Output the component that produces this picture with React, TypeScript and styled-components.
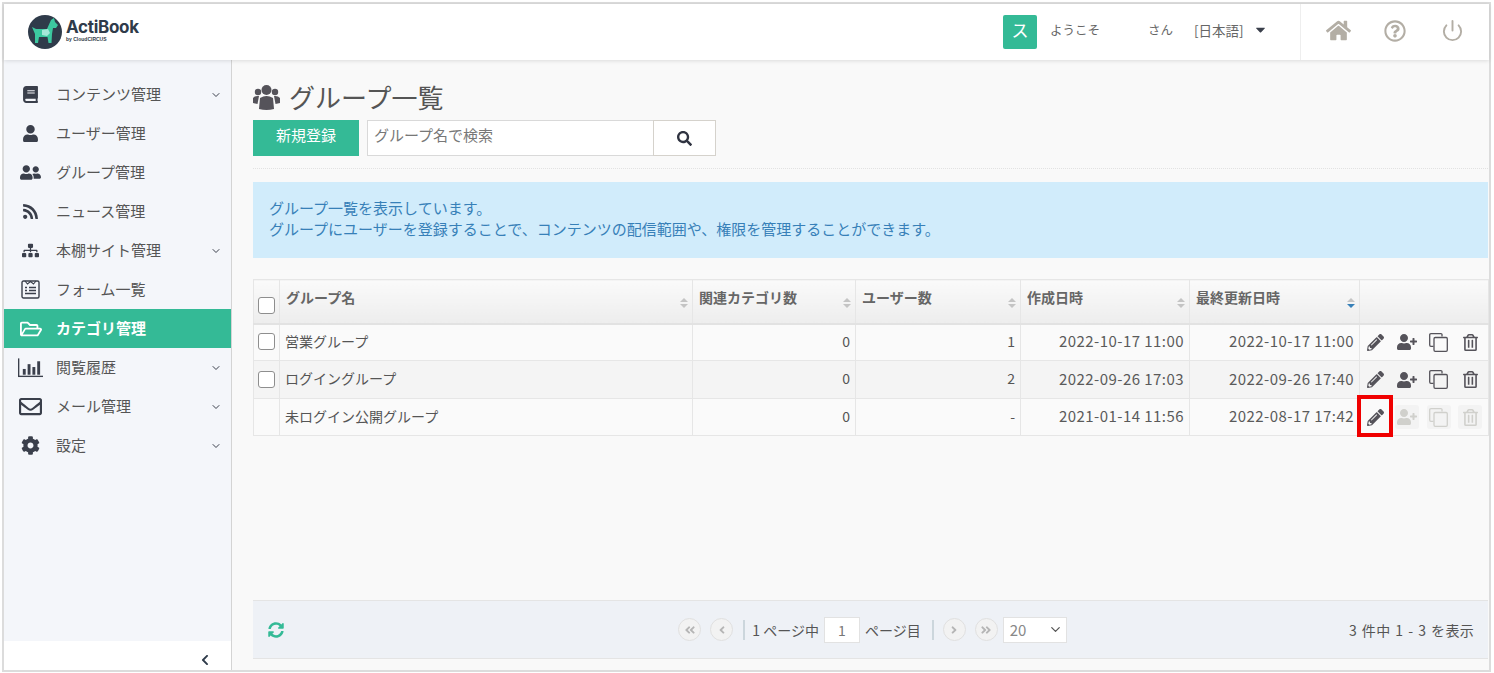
import React from 'react';
import styled, { createGlobalStyle } from 'styled-components';
import {
  FaBook, FaUser, FaUserFriends, FaRss, FaSitemap, FaRegFolderOpen, FaRegEnvelope, FaCog,
  FaHome, FaSearch, FaPencilAlt, FaUserPlus, FaRegTrashAlt, FaSyncAlt,
  FaCaretDown, FaChevronLeft, FaAngleDoubleLeft, FaAngleDoubleRight, FaAngleLeft, FaAngleRight,
  FaRegQuestionCircle,
} from 'react-icons/fa';
import { FiChevronDown, FiPower } from 'react-icons/fi';

const GlobalStyle = createGlobalStyle`
  html, body { margin: 0; padding: 0; height: 100%; overflow: hidden; background: #fff; }
  * { box-sizing: border-box; }
  body { font-family: "Noto Sans CJK JP", "Noto Sans", sans-serif; font-size: 14px; color: #555; }
`;

const Frame = styled.div`
  position: relative;
  margin: 2px 3px 0 2px;
  height: 670px;
  border: 2px solid #dcdcdc;
  display: flex;
  flex-direction: column;
  background: #f9f9f9;
`;

const Header = styled.header`
  height: 56px;
  flex: none;
  background: #fff;
  display: flex;
  align-items: center;
  box-shadow: 0 1px 4px rgba(0, 0, 0, 0.12);
  z-index: 2;
`;

const Logo = styled.div`
  display: flex;
  align-items: center;
  margin-left: 23px;
  gap: 3px;
`;

const LogoText = styled.div`
  display: flex;
  flex-direction: column;
  color: #2f3b4a;
  margin-top: -5px;
`;

const LogoName = styled.span`
  font-family: "Inter", "Liberation Sans", sans-serif;
  font-weight: 700;
  font-size: 17px;
  line-height: 20px;
  letter-spacing: -0.3px;
`;

const LogoSub = styled.span`
  font-family: "Liberation Sans", sans-serif;
  font-size: 5px;
  line-height: 5px;
  font-weight: 700;
`;

const UserArea = styled.div`
  margin-left: auto;
  display: flex;
  align-items: center;
  height: 100%;
  font-size: 12.5px;
  color: #666;
`;

const Avatar = styled.div`
  width: 34px;
  height: 34px;
  border-radius: 2px;
  background: #34ba96;
  color: #fff;
  font-size: 17px;
  padding-bottom: 5px;
  display: flex;
  align-items: center;
  justify-content: center;
  margin-right: 13px;
`;

const Greeting = styled.span`
  width: 98px;
  padding-bottom: 6px;
`;

const Honorific = styled.span`
  width: 46px;
  padding-bottom: 6px;
`;

const Language = styled.span`
  display: flex;
  align-items: center;
  gap: 9px;
  width: 106px;
  color: #666;
  font-size: 13.5px;
  padding-bottom: 5px;
  svg { color: #3a3f4b; font-size: 15px; }
`;

const HeaderIcons = styled.div`
  height: 100%;
  width: 189px;
  border-left: 1px solid #eee;
  display: flex;
  align-items: center;
  color: #b3aea5;
  padding: 0 0 3px 25px;
  gap: 33px;
`;

const PowerIcon = styled(FiPower)`
  margin-left: 2px;
`;

const Body = styled.div`
  flex: 1;
  display: flex;
  min-height: 0;
`;

const Sidebar = styled.aside`
  width: 228px;
  flex: none;
  background: #f4f6fa;
  border-right: 1px solid #d4d4d4;
  display: flex;
  flex-direction: column;
  padding-top: 15px;
`;

const Menu = styled.nav`
  flex: 1;
`;

const MenuItem = styled.div<{ $active?: boolean }>`
  height: 39px;
  display: flex;
  align-items: center;
  padding: 0 10px 0 14px;
  font-size: 15px;
  font-weight: ${(p) => (p.$active ? 700 : 400)};
  background: ${(p) => (p.$active ? '#34ba96' : 'transparent')};
  color: ${(p) => (p.$active ? '#fff' : '#555')};
`;

const MenuIcon = styled.span<{ $active?: boolean }>`
  width: 25px;
  margin-right: 13px;
  display: flex;
  justify-content: center;
  font-size: 17px;
  color: ${(p) => (p.$active ? '#fff' : '#3a3f4b')};
`;

const MenuLabel = styled.span`
  flex: 1;
  padding-bottom: 3px;
`;

const MenuCaret = styled(FiChevronDown)`
  font-size: 12px;
  color: #3a3f4b;
  margin-right: -1px;
`;

const SidebarFoot = styled.div`
  height: 29px;
  flex: none;
  background: #fff;
  display: flex;
  align-items: center;
  justify-content: flex-end;
  padding: 8px 20px 0 0;
  color: #2f3b4a;
  font-size: 12px;
`;

const Main = styled.main`
  flex: 1;
  min-width: 0;
  padding: 19px 0 0 21px;
  margin-right: 1px;
  display: flex;
  flex-direction: column;
`;

const Title = styled.h1`
  margin: 0 0 6px;
  height: 35px;
  font-size: 26px;
  line-height: 34px;
  font-weight: 400;
  color: #555;
  display: flex;
  align-items: center;
  gap: 9px;
`;

const Toolbar = styled.div`
  display: flex;
  height: 36px;
`;

const PrimaryButton = styled.button`
  width: 106px;
  height: 36px;
  border: 0;
  background: #34ba96;
  color: #fff;
  font: inherit;
  font-size: 15px;
  padding: 0 0 8px;
  margin-right: 8px;
`;

const SearchBox = styled.input`
  width: 286px;
  height: 36px;
  border: 1px solid #d9d9d9;
  border-right: 0;
  background: #fff;
  padding: 0 6px 7px;
  font: inherit;
  font-size: 15px;
  &::placeholder { color: #777; opacity: 1; }
`;

const SearchButton = styled.button`
  width: 63px;
  height: 36px;
  background: #fff;
  border: 1px solid #d5d2cc;
  color: #2f3340;
  font-size: 15px;
  display: flex;
  align-items: center;
  justify-content: center;
  padding: 0;
`;

const Divider = styled.div`
  border-top: 1px dotted #e2e2e2;
  margin-top: 12px;
  margin-bottom: 13px;
`;

const Notice = styled.div`
  height: 76px;
  background-color: #d1ecfb;
  background-image: radial-gradient(#bcdcee 0.6px, transparent 0.7px);
  background-size: 6px 6px;
  color: #3780b8;
  font-size: 15px;
  line-height: 21px;
  padding: 15px 16px 0;
  margin-bottom: 21px;
`;

const Table = styled.table`
  width: 1235px;
  table-layout: fixed;
  border-collapse: collapse;
  font-size: 14px;
  color: #555;
`;

const Th = styled.th<{ $w: number }>`
  width: ${(p) => p.$w}px;
  height: 44px;
  border: 1px solid #e6e6e6;
  border-bottom: 2px solid #e2e2e2;
  background: linear-gradient(#fafafa, #ededed);
  font-weight: 700;
  font-size: 14px;
  color: #666;
  text-align: left;
  padding: 0 6px 8px;
  position: relative;
`;

const SortMark = styled.span<{ $on?: boolean }>`
  position: absolute;
  right: 4px;
  top: 18px;
  width: 8px;
  height: 10px;
  &::before, &::after {
    content: '';
    position: absolute;
    left: 0;
    border-left: 4px solid transparent;
    border-right: 4px solid transparent;
  }
  &::before { top: 0; border-bottom: 4px solid #c4c4c4; }
  &::after { bottom: 0; border-top: 4px solid ${(p) => (p.$on ? '#3780b8' : '#c4c4c4')}; }
`;

const Row = styled.tr<{ $shade?: boolean }>`
  background: ${(p) => (p.$shade ? '#f4f4f4' : '#fafafa')};
  td { height: ${(p) => (p.$shade ? 38 : 37)}px; }
`;

const Td = styled.td<{ $right?: boolean }>`
  border: 1px solid #e6e6e6;
  padding: 0 5px 3px;
  text-align: ${(p) => (p.$right ? 'right' : 'left')};
  position: relative;
`;

const DateCell = styled(Td)`
  font-size: 15px;
  letter-spacing: 0.45px;
  color: #5a5a5a;
`;

const Check = styled.span`
  display: block;
  width: 17px;
  height: 17px;
  border: 1px solid #8e8e8e;
  border-radius: 3px;
  background: #fff;
  margin: 0 auto;
`;

const HeadCheck = styled(Check)`
  margin-top: 8px;
`;

const CheckHeader = styled(Th)`
  padding: 0;
`;

const CheckCell = styled(Td)`
  padding: 0 0 1px;
`;

const ActionCell = styled(Td)`
  padding: 0;
`;

const Actions = styled.div`
  display: grid;
  grid-template-columns: repeat(4, 31.5px);
  justify-items: center;
  align-items: center;
`;

const ActionIcon = styled.span<{ $off?: boolean }>`
  width: 24px;
  height: 24px;
  display: flex;
  align-items: center;
  justify-content: center;
  font-size: 17px;
  border-radius: 3px;
  color: ${(p) => (p.$off ? '#d0d0cc' : '#55535a')};
  background: ${(p) => (p.$off ? '#f3f3f3' : 'transparent')};
`;

const Highlight = styled.div`
  position: absolute;
  left: -3px;
  top: -4px;
  width: 36px;
  height: 42px;
  border: 4px solid #f00000;
  pointer-events: none;
`;

const Spacer = styled.div`
  flex: 1;
`;

const Pager = styled.div`
  height: 59px;
  margin-bottom: 11px;
  background: #eef1f6;
  border-top: 1px solid #e4e4e4;
  border-bottom: 1px solid #e4e4e4;
  display: grid;
  grid-template-columns: 1fr auto 1fr;
  align-items: center;
  padding: 0 14px 0 15px;
  font-size: 14px;
  color: #555;
`;

const Refresh = styled.span`
  color: #34ba96;
  font-size: 16px;
  display: flex;
`;

const PagerCenter = styled.div`
  display: flex;
  align-items: center;
  margin-left: 3px;
`;

const Round = styled.span<{ $last?: boolean }>`
  width: 23px;
  height: 23px;
  border-radius: 50%;
  border: 1px solid #e0e0e0;
  background: #f2f2f2;
  color: #b5b5b5;
  font-size: 12px;
  display: flex;
  align-items: center;
  justify-content: center;
  margin-right: ${(p) => (p.$last ? 5 : 9)}px;
`;

const Bar = styled.span<{ $end?: boolean }>`
  width: 2px;
  height: 20px;
  background: #ccd6dc;
  margin: ${(p) => (p.$end ? '0 9px 0 11px' : '0 7px 0 1px')};
`;

const PageInput = styled.span`
  width: 36px;
  height: 26px;
  background: #fff;
  border: 1px solid #e2e2e2;
  display: flex;
  align-items: center;
  justify-content: center;
  margin: 0 5px;
  color: #777;
`;

const PageSelect = styled.span`
  width: 64px;
  height: 26px;
  background: #fff;
  border: 1px solid #e2e2e2;
  display: flex;
  align-items: center;
  justify-content: space-between;
  padding: 0 3px 0 6px;
  color: #888;
  font-size: 15px;
  svg { color: #555; font-size: 15px; }
`;

const PagerCount = styled.div`
  text-align: right;
  letter-spacing: 0.3px;
  word-spacing: 1.4px;
`;

const LogoMark = () => (
  <svg width="36" height="36" viewBox="0 0 36 36">
    <circle cx="18" cy="18" r="17" fill="#2f3b4a" />
    <path d="M5 13 L9 15 L20 15 L24 6 L27 4 L28 8 L31 11 L29 14 L26 14 L25 20 L24.5 29 L21.5 29 L20.5 23 L12 23 L11 29 L8 29 L8 20 Z" fill="#3cc8a0" />
    <path d="M15 16 L21 15 L23 19 L20 22 L15 21 Z" fill="#a5e8d8" />
  </svg>
);

const UsersIcon = () => (
  <svg width="27" height="26" viewBox="0 0 27 26" fill="#55535a">
    <circle cx="13.5" cy="6" r="5" />
    <circle cx="5" cy="8" r="3.2" />
    <circle cx="22" cy="8" r="3.2" />
    <path d="M7 14 Q13.5 10 20 14 L21 25 Q13.5 27 6 25 Z" />
    <path d="M0 14 Q2 11.5 6 12 L4.5 20 L0 19 Z" />
    <path d="M27 14 Q25 11.5 21 12 L22.5 20 L27 19 Z" />
  </svg>
);

const CopyIcon = () => (
  <svg width="19" height="19" viewBox="0 0 19 19" fill="none" stroke="currentColor" strokeWidth="1.3">
    <path d="M13 3.5 V1.5 Q13 0.7 12 0.7 H2 Q0.7 0.7 0.7 2 V12 Q0.7 13.3 2 13.3 H4.5" />
    <rect x="5" y="4.5" width="13.3" height="13.8" rx="1.2" />
  </svg>
);

const FormIcon = () => (
  <svg width="19" height="19" viewBox="0 0 19 19" fill="none" stroke="#3a3f4b">
    <rect x="1" y="1" width="17" height="17" rx="1.5" strokeWidth="1.4" />
    <path d="M4 1 L6.5 4 L9.5 1.5 L12.5 4 L15 1" strokeWidth="1.1" />
    <path d="M4 7.5 H6 M8 7.5 H15 M4 10.5 H6 M8 10.5 H15 M4 13.5 H15" strokeWidth="1.4" />
  </svg>
);

const ChartIcon = () => (
  <svg width="26" height="20" viewBox="0 0 26 20" fill="#3a3f4b">
    <rect x="0" y="0" width="1.4" height="19" />
    <rect x="0" y="18" width="26" height="1.4" />
    <rect x="5" y="11" width="3" height="6" />
    <rect x="10" y="6" width="3" height="11" />
    <rect x="15" y="9" width="3" height="8" />
    <rect x="20" y="3" width="3" height="14" />
  </svg>
);

const menu: { label: string; icon: React.ReactNode; caret?: boolean; active?: boolean }[] = [
  { label: 'コンテンツ管理', icon: <FaBook />, caret: true },
  { label: 'ユーザー管理', icon: <FaUser /> },
  { label: 'グループ管理', icon: <FaUserFriends style={{ fontSize: 21 }} /> },
  { label: 'ニュース管理', icon: <FaRss /> },
  { label: '本棚サイト管理', icon: <FaSitemap />, caret: true },
  { label: 'フォーム一覧', icon: <FormIcon /> },
  { label: 'カテゴリ管理', icon: <FaRegFolderOpen style={{ fontSize: 22 }} />, active: true },
  { label: '閲覧履歴', icon: <ChartIcon />, caret: true },
  { label: 'メール管理', icon: <FaRegEnvelope style={{ fontSize: 23 }} />, caret: true },
  { label: '設定', icon: <FaCog style={{ fontSize: 19 }} />, caret: true },
];

const columns = [
  { label: 'グループ名', w: 413 },
  { label: '関連カテゴリ数', w: 163 },
  { label: 'ユーザー数', w: 165 },
  { label: '作成日時', w: 169 },
  { label: '最終更新日時', w: 170, on: true },
];

const rows = [
  { name: '営業グループ', cats: '0', users: '1', created: '2022-10-17 11:00', updated: '2022-10-17 11:00', locked: false },
  { name: 'ログイングループ', cats: '0', users: '2', created: '2022-09-26 17:03', updated: '2022-09-26 17:40', locked: false },
  { name: '未ログイン公開グループ', cats: '0', users: '-', created: '2021-01-14 11:56', updated: '2022-08-17 17:42', locked: true },
];

export default function App() {
  return (
    <>
      <GlobalStyle />
      <Frame>
        <Header>
          <Logo>
            <LogoMark />
            <LogoText>
              <LogoName>ActiBook</LogoName>
              <LogoSub>by CloudCIRCUS</LogoSub>
            </LogoText>
          </Logo>
          <UserArea>
            <Avatar>ス</Avatar>
            <Greeting>ようこそ</Greeting>
            <Honorific>さん</Honorific>
            <Language>
              [日本語]
              <FaCaretDown />
            </Language>
            <HeaderIcons>
              <FaHome size={25} />
              <FaRegQuestionCircle size={22} />
              <PowerIcon size={23} />
            </HeaderIcons>
          </UserArea>
        </Header>
        <Body>
          <Sidebar>
            <Menu>
              {menu.map((m) => (
                <MenuItem key={m.label} $active={m.active}>
                  <MenuIcon $active={m.active}>{m.icon}</MenuIcon>
                  <MenuLabel>{m.label}</MenuLabel>
                  {m.caret && <MenuCaret />}
                </MenuItem>
              ))}
            </Menu>
            <SidebarFoot>
              <FaChevronLeft />
            </SidebarFoot>
          </Sidebar>
          <Main>
            <Title>
              <UsersIcon />
              グループ一覧
            </Title>
            <Toolbar>
              <PrimaryButton>新規登録</PrimaryButton>
              <SearchBox placeholder="グループ名で検索" />
              <SearchButton>
                <FaSearch />
              </SearchButton>
            </Toolbar>
            <Divider />
            <Notice>
              グループ一覧を表示しています。
              <br />
              グループにユーザーを登録することで、コンテンツの配信範囲や、権限を管理することができます。
            </Notice>
            <Table>
              <thead>
                <tr>
                  <CheckHeader $w={26}>
                    <HeadCheck />
                  </CheckHeader>
                  {columns.map((c) => (
                    <Th key={c.label} $w={c.w}>
                      {c.label}
                      <SortMark $on={c.on} />
                    </Th>
                  ))}
                  <Th $w={129} />
                </tr>
              </thead>
              <tbody>
                {rows.map((r, i) => (
                  <Row key={r.name} $shade={i === 1}>
                    <CheckCell>{!r.locked && <Check />}</CheckCell>
                    <Td>{r.name}</Td>
                    <Td $right>{r.cats}</Td>
                    <Td $right>{r.users}</Td>
                    <DateCell $right>{r.created}</DateCell>
                    <DateCell $right>{r.updated}</DateCell>
                    <ActionCell>
                      <Actions>
                        <ActionIcon><FaPencilAlt /></ActionIcon>
                        <ActionIcon $off={r.locked}><FaUserPlus style={{ fontSize: 20 }} /></ActionIcon>
                        <ActionIcon $off={r.locked}><CopyIcon /></ActionIcon>
                        <ActionIcon $off={r.locked}><FaRegTrashAlt /></ActionIcon>
                      </Actions>
                      {r.locked && <Highlight />}
                    </ActionCell>
                  </Row>
                ))}
              </tbody>
            </Table>
            <Spacer />
            <Pager>
              <Refresh><FaSyncAlt /></Refresh>
              <PagerCenter>
                <Round><FaAngleDoubleLeft /></Round>
                <Round><FaAngleLeft /></Round>
                <Bar />
                1 ページ中
                <PageInput>1</PageInput>
                ページ目
                <Bar $end />
                <Round><FaAngleRight /></Round>
                <Round $last><FaAngleDoubleRight /></Round>
                <PageSelect>20<FiChevronDown /></PageSelect>
              </PagerCenter>
              <PagerCount>3 件中 1 - 3 を表示</PagerCount>
            </Pager>
          </Main>
        </Body>
      </Frame>
    </>
  );
}
